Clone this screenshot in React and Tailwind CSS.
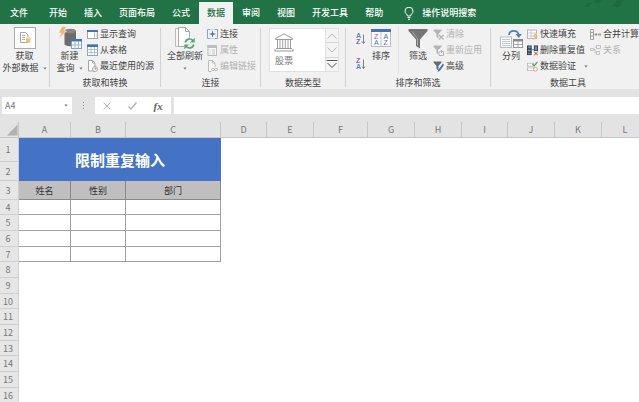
import { useState } from "react";
import clsx from "clsx";

const TABS = ["开始", "插入", "页面布局", "公式", "数据", "审阅", "视图", "开发工具", "帮助"];

const COLUMNS = [
  { id: "A", width: "w-[52px]" },
  { id: "B", width: "w-[55px]" },
  { id: "C", width: "w-[95px]" },
  { id: "D", width: "w-[46px]" },
  { id: "E", width: "w-[47px]" },
  { id: "F", width: "w-[54px]" },
  { id: "G", width: "w-[47px]" },
  { id: "H", width: "w-[47px]" },
  { id: "I", width: "w-[46px]" },
  { id: "J", width: "w-[47px]" },
  { id: "K", width: "w-[47px]" },
  { id: "L", width: "w-[47px]" },
];

const HEADINGS = ["姓名", "性别", "部门"];
const ROW_HEIGHTS = ["h-[15px]", "h-4", "h-4"];

/* ---------- icons ---------- */

const Caret = () => (
  <svg width="4" height="3" viewBox="0 0 4 3" className="inline-block shrink-0" aria-hidden="true">
    <path d="M0.300 0.500h3.400L2 2.500z" fill="#777" />
  </svg>
);

const ExternalDataIcon = () => (
  <svg width="22" height="22" viewBox="0 0 22 22" fill="none">
    <rect x="0.500" y="0.500" width="21" height="21" fill="#fdfdfd" stroke="#a9a9a9" />
    <path d="M6.500 5.500h5l2.500 2.500v7.500H6.500z" fill="#fff" stroke="#a8a8a8" />
    <path d="M8 8.500h3M8 10.500h3M8 12.500h3" stroke="#b5b5b5" />
    <path d="M12 11h4.500v4.500H12z" fill="#ecc477" />
    <ellipse cx="14.200" cy="11" rx="2.300" ry="1" fill="#f6dfae" />
  </svg>
);

const NewQueryIcon = () => (
  <svg width="24" height="24" viewBox="0 0 24 24" fill="none">
    <path d="M6.500 5v13c0 1.300 2.500 2.200 5.800 2.200s5.700-0.900 5.700-2.200V5z" fill="#6d6d6d" />
    <ellipse cx="12.200" cy="5" rx="5.800" ry="2.300" fill="#868686" />
    <path d="M4 0.500h4.500L6 5h2.500L0.500 13l2.800-6H0.500z" fill="#f0b764" stroke="#f1f1f1" strokeWidth="0.600" />
    <rect x="13.500" y="13.500" width="10" height="9" fill="#fff" stroke="#8b9fbd" />
    <path d="M13 13h11v2.500H13z" fill="#3f74b8" />
    <path d="M17 15.500v7M20.500 15.500v7M14 19h10" stroke="#9fb3d0" />
  </svg>
);

const QueryPaneIcon = () => (
  <svg width="11" height="11" viewBox="0 0 11 11" fill="none">
    <rect x="0.500" y="1.500" width="10" height="8" fill="#fff" stroke="#a5a5a5" />
    <path d="M0 1h11v2H0z" fill="#3f74b8" />
    <path d="M7.500 3v6M8.500 5h2M8.500 7h2" stroke="#c4c4c4" />
  </svg>
);

const FromTableIcon = () => (
  <svg width="11" height="12" viewBox="0 0 11 12" fill="none">
    <rect x="0.500" y="1" width="10" height="10.500" fill="#fff" stroke="#8ea4c4" />
    <path d="M0 0.500h11V3H0z" fill="#3f74b8" />
    <path d="M4 3v8M7.500 3v8M0 5.500h11M0 8.500h11" stroke="#a5b4ca" strokeWidth="0.800" />
  </svg>
);

const RecentIcon = () => (
  <svg width="11" height="12" viewBox="0 0 11 12" fill="none">
    <path d="M1.500 0.500h4l2.500 2.500v8H1.500z" fill="#fff" stroke="#a5a5a5" />
    <path d="M5.500 0.500V3H8" stroke="#a5a5a5" />
    <circle cx="8" cy="9" r="2.500" fill="#f6f6f6" stroke="#999" strokeWidth="0.800" />
    <path d="M8 7.500V9h1.300" stroke="#777" strokeWidth="0.700" />
  </svg>
);

const RefreshAllIcon = () => (
  <svg width="22" height="24" viewBox="0 0 22 24" fill="none">
    <path d="M1.500 2.500h8l4 4v14h-12z" fill="#f7f7f7" stroke="#bcbcbc" />
    <path d="M4.500 1.500h7l4 4v15h-11z" fill="#fff" stroke="#a9a9a9" />
    <path d="M11.500 1.500v4h4" stroke="#a9a9a9" />
    <circle cx="15.500" cy="17.500" r="6" fill="#f1f1f1" />
    <path d="M11.300 16.500a4.300 4.300 0 0 1 7.700-1.700M19.700 18.500a4.300 4.300 0 0 1-7.700 1.700" stroke="#57a67c" strokeWidth="1.700" />
    <path d="M20.700 11.700v4.800H16zM10.300 23.300v-4.800H15z" fill="#57a67c" />
  </svg>
);

const ConnectionIcon = () => (
  <svg width="11" height="10" viewBox="0 0 11 10" fill="none">
    <path d="M3 0.500H0.500v9H3M8 0.500h2.500v9H8" stroke="#8fa3c0" />
    <path d="M3 0.500h5M3 9.500h5" stroke="#c9d3e2" />
    <path d="M5.500 2v6M2.500 5h6" stroke="#3f74b8" strokeWidth="0.800" />
    <path d="M5.500 3.200L7.300 5 5.500 6.800 3.700 5z" fill="#3f74b8" />
  </svg>
);

const PropertiesIcon = () => (
  <svg width="11" height="11" viewBox="0 0 11 11" fill="none">
    <rect x="1" y="0.500" width="8.500" height="10" fill="#f6f6f6" stroke="#bdbdbd" />
    <path d="M0.500 0h9.500v3H0.500z" fill="#bdbdbd" />
    <path d="M2.500 5h1M5 5h3M2.500 7h1M5 7h3M2.500 9h1M5 9h3" stroke="#bdbdbd" strokeWidth="0.800" />
  </svg>
);

const EditLinksIcon = () => (
  <svg width="11" height="12" viewBox="0 0 11 12" fill="none">
    <path d="M4.500 11.500h-3v-11h4L8 3v4" fill="#f6f6f6" stroke="#bdbdbd" />
    <path d="M5.500 0.500V3H8" stroke="#bdbdbd" />
    <rect x="4.500" y="8.500" width="3" height="2" rx="1" stroke="#b3b3b3" />
    <rect x="7.500" y="8.500" width="3" height="2" rx="1" stroke="#b3b3b3" />
  </svg>
);

const BankIcon = () => (
  <svg width="20" height="19" viewBox="0 0 20 19" fill="none" stroke="#9a9a9a">
    <path d="M1.500 5.500L10 0.800l8.500 4.700v1h-17z" />
    <path d="M3.500 7v8M6 7v8M8.700 7v8M11.300 7v8M14 7v8M16.500 7v8" strokeWidth="0.900" />
    <path d="M2 15.500h16M0.500 18h19M1 16v2M19 16v2" />
  </svg>
);

const SortLettersIcon = ({ top, bottom }) => (
  <svg width="10" height="13" viewBox="0 0 10 13" fill="none">
    <text x="0" y="6" fontSize="7" fontWeight="700" fontFamily="Liberation Sans, sans-serif" fill={top === "A" ? "#5d86bd" : "#9463a6"}>{top}</text>
    <text x="0" y="12" fontSize="7" fontWeight="700" fontFamily="Liberation Sans, sans-serif" fill={bottom === "A" ? "#5d86bd" : "#9463a6"}>{bottom}</text>
    <path d="M7.500 2.500v9M6 9.500l1.500 2 1.500-2" stroke="#777" strokeWidth="0.900" />
  </svg>
);

const SortIcon = () => (
  <svg width="20" height="18" viewBox="0 0 20 18" fill="none" fontFamily="Liberation Sans, sans-serif" fontSize="7">
    <rect x="0.500" y="0.500" width="19" height="17" fill="#fff" stroke="#b5bfcc" />
    <path d="M0 0h20v3H0z" fill="#3f74b8" />
    <path d="M10 3v14" stroke="#b5bfcc" />
    <text x="3" y="10" fill="#8b4f9f">Z</text>
    <text x="3" y="16" fill="#3f74b8">A</text>
    <text x="12.500" y="10" fill="#3f74b8">A</text>
    <text x="12.500" y="16" fill="#8b4f9f">Z</text>
  </svg>
);

const FilterIcon = () => (
  <svg width="20" height="21" viewBox="0 0 20 21">
    <path d="M0.500 1h19v2L12 11.500V20.500L8 18v-6.500L0.500 3z" fill="#757575" />
    <path d="M4 3.500l5.500 7v7" fill="none" stroke="#ababab" />
  </svg>
);

const ClearFilterIcon = () => (
  <svg width="11" height="11" viewBox="0 0 11 11">
    <path d="M0.500 0.500h8v1L5.500 5v4.500l-2-1.500V5l-3-3.500z" fill="#b3b3b3" />
    <path d="M6 6l4.500 4.500M10.500 6L6 10.500" stroke="#b3b3b3" strokeWidth="1.300" />
  </svg>
);

const ReapplyIcon = () => (
  <svg width="11" height="11" viewBox="0 0 11 11">
    <path d="M0.500 0.500h8v1L5.500 5v4.500l-2-1.500V5l-3-3.500z" fill="#b3b3b3" />
    <rect x="5" y="4.500" width="6" height="6.500" fill="#f1f1f1" />
    <path d="M6 6v4.500h4.500V6.500H8M9 5L7.500 6.500 9 8" fill="none" stroke="#b3b3b3" />
  </svg>
);

const AdvancedIcon = () => (
  <svg width="11" height="11" viewBox="0 0 11 11">
    <path d="M0.500 0.500h8v1L5.500 5v4.500l-2-1.500V5l-3-3.500z" fill="#6b6b6b" />
    <path d="M10 2.500L5.500 8.500l-1 2.500L7 9.700l4-5.700z" fill="#3f74b8" />
  </svg>
);

const TextToColumnsIcon = () => (
  <svg width="23" height="19" viewBox="0 0 23 19" fill="none">
    <path d="M9 6c0.500-5.500 9-5.500 9.700 0" stroke="#4a80bd" strokeWidth="1.700" />
    <path d="M15.500 5h6.300L18.800 9z" fill="#4a80bd" />
    <rect x="0.500" y="8" width="11" height="10.500" fill="#fff" stroke="#b5bfcc" />
    <path d="M2 10.500h8M2 12.500h8M2 14.500h8M2 16.500h8" stroke="#a9bbd4" strokeWidth="0.800" />
    <rect x="13.500" y="10.500" width="9" height="8" fill="#fff" stroke="#999" />
    <path d="M13 10h10v2.500H13z" fill="#8a8a8a" />
    <path d="M18 12v6M14 15.500h8" stroke="#999" strokeWidth="0.800" />
  </svg>
);

const FlashFillIcon = () => (
  <svg width="11" height="11" viewBox="0 0 11 11" fill="none">
    <rect x="0.500" y="1" width="9" height="8.500" fill="#fff" stroke="#b3b3b3" />
    <path d="M0 4h10M0 7h10M4 1v9" stroke="#b6c2d3" strokeWidth="0.800" />
    <path d="M7.500 4.500H10L8.500 7H11L6.500 11l1-3H6z" fill="#f0c36b" />
  </svg>
);

const DedupeIcon = () => (
  <svg width="12" height="11" viewBox="0 0 12 11" fill="none">
    <rect x="0.500" y="0.500" width="4" height="9.500" fill="#5b8fd0" stroke="#3d3d3d" />
    <path d="M0 3h5v1.500H0zM0 6.500h5V8H0z" fill="#3d3d3d" />
    <path d="M5 4.500h2.500" stroke="#777" />
    <rect x="8" y="0.500" width="3.500" height="5" fill="#5b8fd0" stroke="#3d3d3d" />
    <path d="M8 7l3.500 3.500M11.500 7L8 10.500" stroke="#c9705f" strokeWidth="1.100" />
  </svg>
);

const ValidationIcon = () => (
  <svg width="12" height="11" viewBox="0 0 12 11" fill="none">
    <rect x="0.500" y="2" width="7" height="3" fill="#fff" stroke="#b0b0b0" strokeWidth="0.800" />
    <rect x="0.500" y="7" width="7" height="3" fill="#fff" stroke="#b0b0b0" strokeWidth="0.800" />
    <path d="M6 3l1.800 1.800L11.500 0.500" stroke="#4b9c6d" strokeWidth="1.300" />
    <circle cx="9.300" cy="8.500" r="2" fill="#fff" stroke="#dd9a62" />
  </svg>
);

const ConsolidateIcon = () => (
  <svg width="11" height="11" viewBox="0 0 11 11" fill="none">
    <path d="M0.500 0.500h3v10h-3zM0.500 3.500h3M0.500 7h3" stroke="#9a9a9a" strokeWidth="0.900" />
    <path d="M5 5.500h2.500M6.500 4L5 5.500 6.500 7" stroke="#888" strokeWidth="0.900" />
    <path d="M8 4.500h3v2H8z" fill="#a3a3a3" />
  </svg>
);

const RelationsIcon = () => (
  <svg width="11" height="10" viewBox="0 0 11 10" fill="none" stroke="#bdbdbd">
    <path d="M0.500 3.500h3v2h-3zM6.500 0.500h4v3h-4zM6.500 6.500h3v3h-3zM3.500 4.500h1.500V8h1.500M5 2h1.500" strokeWidth="0.900" />
  </svg>
);

const BulbIcon = () => (
  <svg width="10" height="13" viewBox="0 0 10 13" fill="none" stroke="#fff">
    <path d="M3.500 9c0-1.500-2.500-2.500-2.500-4.800a4 4 0 0 1 8 0C9 6.500 6.500 7.500 6.500 9z" />
    <path d="M3.500 10.500h3M4 12.300h2" />
  </svg>
);

/* ---------- ribbon parts ---------- */

const Group = ({ title, className, children }) => (
  <section className={clsx("flex shrink-0 flex-col", className)}>
    <div className="flex h-12">{children}</div>
    <h2 className="mt-0.5 text-center leading-[13px]">{title}</h2>
  </section>
);

const Divider = () => <div className="my-0.5 w-px shrink-0 bg-[#d2d2d2]" />;

const BigButton = ({ icon, label, second, caret, className }) => (
  <button type="button" className={clsx("flex h-12 shrink-0 flex-col items-center leading-3 hover:bg-[#dcdcdc]", className)}>
    <span className="flex h-6 items-center justify-center">{icon}</span>
    <span className="whitespace-nowrap">{label}</span>
    <span className="flex h-3 items-center gap-1 whitespace-nowrap">
      {second}
      {caret && <Caret />}
    </span>
  </button>
);

const SmallButton = ({ icon, label, disabled, caret }) => (
  <button
    type="button"
    disabled={disabled}
    className="flex h-4 items-center gap-0.5 whitespace-nowrap enabled:hover:bg-[#dcdcdc] disabled:text-[#b1b1b1]"
  >
    <span className="flex w-[11px] shrink-0 justify-center">{icon}</span>
    {label}
    {caret && <span className="ml-1.5 flex"><Caret /></span>}
  </button>
);

const Ribbon = () => (
  <div className="flex h-[65px] overflow-hidden bg-[#f1f1f1] pt-0.5 text-[9px] text-[#444]">
    <section className="w-[49px] shrink-0">
      <BigButton icon={<ExternalDataIcon />} label="获取" second="外部数据" caret className="w-full" />
    </section>
    <Divider />
    <Group title="获取和转换" className="w-[110px]">
      <BigButton icon={<NewQueryIcon />} label="新建" second="查询" caret className="w-[37px] pl-0.5" />
      <div className="flex flex-col">
        <SmallButton icon={<QueryPaneIcon />} label="显示查询" />
        <SmallButton icon={<FromTableIcon />} label="从表格" />
        <SmallButton icon={<RecentIcon />} label="最近使用的源" />
      </div>
    </Group>
    <Divider />
    <Group title="连接" className="w-[99px]">
      <BigButton icon={<RefreshAllIcon />} label="全部刷新" caret className="w-[46px] pl-0.5" />
      <div className="flex flex-col">
        <SmallButton icon={<ConnectionIcon />} label="连接" />
        <SmallButton icon={<PropertiesIcon />} label="属性" disabled />
        <SmallButton icon={<EditLinksIcon />} label="编辑链接" disabled />
      </div>
    </Group>
    <Divider />
    <Group title="数据类型" className="w-[84px]">
      <div className="mt-0.5 mr-1.5 mb-0.5 ml-2 flex flex-1 border border-[#e0e0e0] bg-white">
        <button type="button" className="flex w-7 flex-col items-center gap-0.5 pt-1 leading-[13px] text-[#777]">
          <BankIcon />
          股票
        </button>
        <div className="ml-auto flex w-[13px] flex-col divide-y divide-[#d5d5d5] border-l border-[#e0e0e0] bg-[#f4f4f4]">
          <button type="button" aria-label="上" className="flex flex-1 items-center justify-center">
            <svg width="10" height="6" viewBox="0 0 10 6" fill="none" stroke="#b5b5b5"><path d="M0.500 5.500L5 1l4.500 4.500" /></svg>
          </button>
          <button type="button" aria-label="下" className="flex flex-1 items-center justify-center">
            <svg width="10" height="6" viewBox="0 0 10 6" fill="none" stroke="#b5b5b5"><path d="M0.500 0.500L5 5l4.500-4.500" /></svg>
          </button>
          <button type="button" aria-label="更多" className="flex flex-1 items-center justify-center">
            <svg width="12" height="10" viewBox="0 0 12 10" fill="none" stroke="#555"><path d="M0.500 1.500h11M1.500 4L6 8.500 10.500 4" /></svg>
          </button>
        </div>
      </div>
    </Group>
    <Divider />
    <Group title="排序和筛选" className="w-36">
      <div className="flex w-[22px] flex-col items-end justify-between pt-1.5 pr-0.5 pb-1">
        <button type="button" aria-label="升序"><SortLettersIcon top="A" bottom="Z" /></button>
        <button type="button" aria-label="降序"><SortLettersIcon top="Z" bottom="A" /></button>
      </div>
      <BigButton icon={<SortIcon />} label="排序" className="w-[26px]" />
      <div className="mx-1 w-px bg-[#e2e2e2]" />
      <BigButton icon={<FilterIcon />} label="筛选" className="w-[30px]" />
      <div className="flex flex-col">
        <SmallButton icon={<ClearFilterIcon />} label="清除" disabled />
        <SmallButton icon={<ReapplyIcon />} label="重新应用" disabled />
        <SmallButton icon={<AdvancedIcon />} label="高级" />
      </div>
    </Group>
    <Divider />
    <Group title="数据工具" className="w-[154px]">
      <BigButton icon={<TextToColumnsIcon />} label="分列" className="w-9 pl-1" />
      <div className="flex w-[63px] flex-col">
        <SmallButton icon={<FlashFillIcon />} label="快速填充" />
        <SmallButton icon={<DedupeIcon />} label="删除重复值" />
        <SmallButton icon={<ValidationIcon />} label="数据验证" caret />
      </div>
      <div className="flex flex-col">
        <SmallButton icon={<ConsolidateIcon />} label="合并计算" />
        <SmallButton icon={<RelationsIcon />} label="关系" disabled />
      </div>
    </Group>
  </div>
);

const TabBar = ({ active, onChange }) => (
  <nav className="relative flex h-6 shrink-0 items-end gap-px overflow-hidden bg-[#217346] text-[9px] font-medium text-white">
    <svg width="60" height="8" viewBox="0 0 60 8" className="absolute top-0 right-0" aria-hidden="true">
      <path d="M4 7l5-4h4l-3 4zM15 0h8l-2 3h-5zM38 0h7l-5 7h-7z" fill="#1e6a40" />
    </svg>
    <button type="button" className="h-[22px] w-10 shrink-0 pr-0.5">文件</button>
    {TABS.map((tab) => (
      <button
        key={tab}
        type="button"
        onClick={() => onChange(tab)}
        className={clsx(
          "h-[22px] shrink-0 px-2 whitespace-nowrap",
          tab === active ? "bg-[#f1f1f1] text-[#217346]" : "hover:bg-[#2b8052]"
        )}
      >
        {tab}
      </button>
    ))}
    <button type="button" className="ml-3 flex h-[22px] shrink-0 items-center gap-2 whitespace-nowrap">
      <BulbIcon />
      操作说明搜索
    </button>
  </nav>
);

const FormulaBar = () => (
  <div className="mt-2 flex h-[17px] shrink-0 pl-0.5 text-[9px] text-[#777]">
    <label className="flex w-[70px] items-center bg-white pr-1">
      <input aria-label="名称框" defaultValue="A4" className="w-full min-w-0 pl-[3px] outline-none" />
      <Caret />
    </label>
    <div className="flex w-[23px] flex-col items-center justify-center gap-0.5">
      <span className="size-px bg-[#888]" />
      <span className="size-px bg-[#888]" />
      <span className="size-px bg-[#888]" />
    </div>
    <div className="flex w-[76px] items-center justify-around bg-white">
      <button type="button" aria-label="取消">
        <svg width="8" height="8" viewBox="0 0 8 8" stroke="#b0b0b0"><path d="M0.500 0.500l7 7M7.500 0.500l-7 7" /></svg>
      </button>
      <button type="button" aria-label="输入">
        <svg width="9" height="8" viewBox="0 0 9 8" fill="none" stroke="#b0b0b0" strokeWidth="1.300"><path d="M0.500 4.500L3 7l5.500-6.500" /></svg>
      </button>
      <button type="button" className="font-['Liberation_Serif',serif] text-[11px] leading-3 font-bold text-[#666] italic">fx</button>
    </div>
    <input aria-label="编辑栏" className="ml-[3px] min-w-0 flex-1 bg-white px-1 outline-none" />
  </div>
);

const RowHeader = ({ n }) => (
  <th scope="row" className="border-r border-b border-[#cfcfcf] bg-[#e6e6e6] pr-0.5 font-normal text-[#777]">{n}</th>
);

const Sheet = () => (
  <div className="mt-2 min-h-0 flex-1 overflow-hidden bg-white">
    <table className="w-full table-fixed border-separate border-spacing-0 text-center text-[9px] leading-[13px] text-[#333] [&_td]:p-0 [&_th]:py-0">
      <colgroup>
        <col className="w-[19px]" />
        {COLUMNS.map((c) => <col key={c.id} className={c.width} />)}
        <col />
      </colgroup>
      <thead className="bg-[#e3e3e3] text-[#777]">
        <tr className="h-4">
          <td className="border-r border-b border-[#c6c6c6]">
            <svg width="11" height="12" viewBox="0 0 11 12" className="ml-auto block" aria-hidden="true">
              <path d="M10.500 0.500V11.500H0z" fill="#b1b1b1" />
            </svg>
          </td>
          {COLUMNS.map((c) => (
            <th key={c.id} scope="col" className="border-r border-b border-[#c6c6c6] font-normal">{c.id}</th>
          ))}
          <td className="border-b border-[#c6c6c6]" />
        </tr>
      </thead>
      <tbody>
        <tr className="h-6">
          <RowHeader n={1} />
          <td colSpan={3} rowSpan={2} className="bg-[#4472c4] text-[15px] leading-5 font-bold text-white">限制重复输入</td>
        </tr>
        <tr className="h-[19px]"><RowHeader n={2} /></tr>
        <tr className="h-[19px]">
          <RowHeader n={3} />
          {HEADINGS.map((h) => (
            <td key={h} className="border-r border-b border-[#8a8a8a] bg-[#bfbfbf]">{h}</td>
          ))}
        </tr>
        {Array.from({ length: 13 }, (_, i) => (
          <tr key={i} className={ROW_HEIGHTS[i % 3]}>
            <RowHeader n={i + 4} />
            {i < 4 && HEADINGS.map((h) => <td key={h} className="border-r border-b border-[#a0a0a0]" />)}
          </tr>
        ))}
      </tbody>
    </table>
  </div>
);

const App = () => {
  const [tab, setTab] = useState("数据");

  return (
    <div className="flex h-screen flex-col overflow-hidden bg-[#e3e3e3] font-['Noto_Sans_CJK_SC',sans-serif]">
      <TabBar active={tab} onChange={setTab} />
      <div className="shrink-0">
        <Ribbon />
      </div>
      <FormulaBar />
      <Sheet />
    </div>
  );
};

export default App;
